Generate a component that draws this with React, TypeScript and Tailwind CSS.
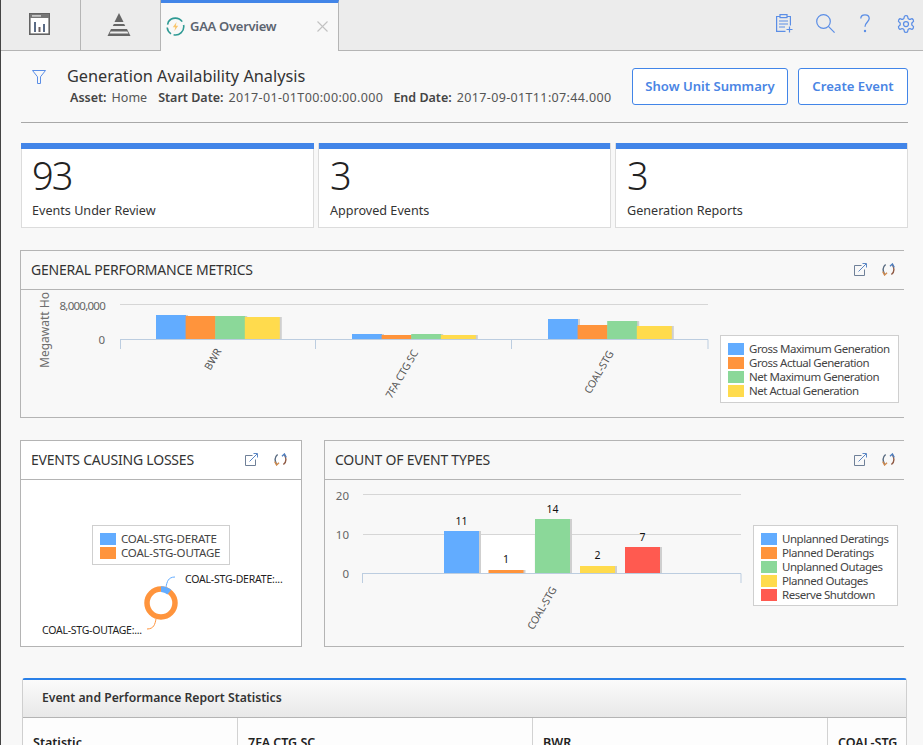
import React from "react";

const BLUE = "#62acff", ORANGE = "#ff943c", GREEN = "#8bd899", YELLOW = "#ffdb4d", RED = "#ff5a50";

function ExternalIcon() {
  return (
    <svg width="13" height="13" viewBox="0 0 13 13" fill="none" strokeWidth="1">
      <path d="M7.5 2.5H0.5V12.5H10.5V6.5" stroke="#6f8098" />
      <path d="M4.5 8.5L12 1M8.5 0.5H12.5V4.5" stroke="#5c87c4" />
    </svg>
  );
}

function RefreshIcon() {
  return (
    <svg width="13" height="13" viewBox="0 0 13 13" fill="none" strokeWidth="1.4">
      <path d="M3.6 1.5C1 3.5 0.4 7 2.4 11" stroke="#56697f" />
      <path d="M0.8 8.6L2.6 12L5 9.8" stroke="#d08a4c" />
      <path d="M9.4 11.5C12 9.5 12.6 6 10.6 2" stroke="#8f5a44" />
      <path d="M12.2 4.4L10.4 1L8 3.2" stroke="#4f7fc0" />
    </svg>
  );
}

function PanelHeader({ title, padRight = "pr-[9px]", gap = "gap-[15px]" }: { title: string; padRight?: string; gap?: string }) {
  return (
    <div className={"h-[39px] flex items-center justify-between border-b border-[#b4b4b4] pl-[10px] shrink-0 " + padRight}>
      <span className="text-[14px] tracking-[-0.22px] text-[#333] mb-[1px]">{title}</span>
      <div className={"flex items-center mb-[2px] " + gap}>
        <ExternalIcon />
        <RefreshIcon />
      </div>
    </div>
  );
}

function Legend({ items, className }: { items: [string, string][]; className: string }) {
  return (
    <div className={"flex flex-col bg-white border border-[#cfcfcf] py-[6px] pl-[7px] pr-[7px] " + className}>
      {items.map(([c, t]) => (
        <div key={t} className="flex items-center h-[14px] gap-[5px] whitespace-nowrap text-[11.5px] text-[#444]">
          <span className="w-[16px] h-[12px] shrink-0" style={{ background: c }} />
          <span>{t}</span>
        </div>
      ))}
    </div>
  );
}

function KPI({ value, label, pad }: { value: string; label: string; pad: string }) {
  return (
    <div className={"h-[85px] bg-white border border-[#dcdcdc] border-t-0 flex flex-col " + pad}>
      <div className="h-[6px] bg-[#4285e8] -mx-[11px] shrink-0" />
      <div className="text-[38px] leading-[50px] font-light tracking-[-2px] text-[#222] mt-[1px]">{value}</div>
      <div className="text-[12.6px] leading-[18px] text-[#333] mt-[2px]">{label}</div>
    </div>
  );
}

function Bar({ x, top, w, base, c }: { x: number; top: number; w: number; base: number; c: string }) {
  return (
    <g>
      <rect x={x + 2} y={top} width={w} height={base - top} fill="#cfcfcf" />
      <rect x={x} y={top} width={w} height={base - top} fill={c} />
    </g>
  );
}

const FONT = "'Noto Sans', 'Open Sans', sans-serif";

function GeneralChart() {
  // offset: svg origin = page (21, 290)
  const ox = 21, oy = 290, b = 339.5 - oy;
  const groups: [number, number[]][] = [
    [156, [315, 316, 316, 317]],
    [352, [334, 335, 334, 335]],
    [548, [319, 325, 321, 326]],
  ];
  const colors = [BLUE, ORANGE, GREEN, YELLOW];
  return (
    <svg width="699" height="127" style={{ fontFamily: FONT }} className="shrink-0">
      <line x1={120 - ox} x2={708 - ox} y1={304.5 - oy} y2={304.5 - oy} stroke="#d6d6d6" />
      {groups.map(([x, tops]) =>
        [0, 1, 2, 3].map((i) => (
          <Bar key={x + "-" + i} x={x - ox + i * 29.6} top={tops[i] - oy} w={i === 3 ? 35 : 30} base={b} c={colors[i]} />
        ))
      )}
      <line x1={120 - ox} x2={708 - ox} y1={b} y2={b} stroke="#bccde0" />
      {[120.5, 315.5, 511.5, 708].map((x) => (
        <line key={x} x1={x - ox} x2={x - ox} y1={b} y2={349 - oy} stroke="#bccde0" />
      ))}
      <text x={84} y={20} textAnchor="end" fontSize="11.5" letterSpacing="-0.75" fill="#666">8,000,000</text>
      <text x={84} y={54} textAnchor="end" fontSize="11.5" fill="#666">0</text>
      <text transform="translate(28,40) rotate(-90)" textAnchor="middle" fontSize="12" fill="#6e6e6e">Megawatt Ho</text>
      <text transform="translate(195,71) rotate(-60)" textAnchor="middle" fontSize="10.5" fill="#555">BWR</text>
      <text transform="translate(384,86) rotate(-60)" textAnchor="middle" fontSize="10.5" letterSpacing="-0.2" fill="#555">7FA CTG SC</text>
      <text transform="translate(581,84) rotate(-60)" textAnchor="middle" fontSize="10.5" letterSpacing="-0.2" fill="#555">COAL-STG</text>
    </svg>
  );
}

function Donut() {
  // svg origin = page (21, 565)
  const ox = 21, oy = 565;
  const cx = 161 - ox, cy = 603 - oy;
  return (
    <svg width="280" height="80" style={{ fontFamily: FONT }} className="shrink-0">
      <circle cx={cx} cy={cy} r={14} fill="none" stroke={ORANGE} strokeWidth="5.5" />
      <path d={`M${cx} ${cy - 16.8} A16.8 16.8 0 0 1 ${cx + 10.2} ${cy - 13.3} L${cx + 6.5} ${cy - 8.6} A11 11 0 0 0 ${cx} ${cy - 11} Z`} fill={BLUE} />
      <path d={`M${166 - ox} ${587 - oy} C${167 - ox} ${582 - oy} ${168 - ox} ${577 - oy} ${175 - ox} ${577 - oy}`} fill="none" stroke={BLUE} />
      <path d={`M${156 - ox} ${619 - oy} C${155 - ox} ${624 - oy} ${154 - ox} ${629 - oy} ${147 - ox} ${629 - oy}`} fill="none" stroke={ORANGE} />
      <text x={185 - ox} y={583 - oy} fontSize="10.5" letterSpacing="-0.2" fill="#222">COAL-STG-DERATE:...</text>
      <text x={42 - ox} y={634 - oy} fontSize="10.5" letterSpacing="-0.25" fill="#222">COAL-STG-OUTAGE:...</text>
    </svg>
  );
}

function EventChart() {
  // svg origin = page (325, 480)
  const ox = 325, oy = 480, b = 573.5 - oy;
  const bars: [number, number, string, string, number][] = [
    [444, 531, BLUE, "11", 521],
    [488.5, 570, ORANGE, "1", 559],
    [535, 519, GREEN, "14", 509],
    [580, 566, YELLOW, "2", 555],
    [625, 547, RED, "7", 537],
  ];
  return (
    <svg width="428" height="165" style={{ fontFamily: FONT }} className="shrink-0">
      {[494.5, 534.5].map((y) => (
        <line key={y} x1={363 - ox} x2={741 - ox} y1={y - oy} y2={y - oy} stroke="#d6d6d6" />
      ))}
      <rect x={481 - ox} y={535 - oy} width={53} height={38} fill="#ffffff" />
      {bars.map(([x, t, c, l, ly]) => (
        <g key={l}>
          <Bar x={x - ox} top={t - oy} w={35} base={b} c={c} />
          <text x={x - ox + 17.5} y={ly - oy + 4} textAnchor="middle" fontSize="10.5" fill="#111">{l}</text>
        </g>
      ))}
      <line x1={362 - ox} x2={741 - ox} y1={b} y2={b} stroke="#bccde0" />
      <line x1={362.5 - ox} x2={362.5 - ox} y1={b} y2={583 - oy} stroke="#bccde0" />
      <line x1={741 - ox} x2={741 - ox} y1={b} y2={583 - oy} stroke="#bccde0" />
      <text x={24} y={20} textAnchor="end" fontSize="11.5" fill="#666">20</text>
      <text x={24} y={59} textAnchor="end" fontSize="11.5" fill="#666">10</text>
      <text x={24} y={98} textAnchor="end" fontSize="11.5" fill="#666">0</text>
      <text transform="translate(220,130) rotate(-60)" textAnchor="middle" fontSize="10.5" letterSpacing="-0.2" fill="#555">COAL-STG</text>
    </svg>
  );
}

function TopIcons() {
  return (
    <div className="ml-auto flex items-center h-full pr-[7px] pb-[3px]">
      <svg width="17" height="19" viewBox="0 0 17 19" fill="none" stroke="#5b8ee6" strokeWidth="1.2">
        <path d="M4 2.5H0.6V17.4H9.5M11 2.5H14.4V11.5" />
        <rect x="4" y="0.6" width="7" height="3" />
        <path d="M3 7H12M3 10H12M3 13H9" />
        <path d="M13.5 12.5V18.5M10.5 15.5H16.5" />
      </svg>
      <svg width="19" height="19" viewBox="0 0 19 19" fill="none" stroke="#5b8ee6" strokeWidth="1.2" className="ml-[23px]">
        <circle cx="7.5" cy="7.5" r="6.8" />
        <path d="M12.4 12.4L18.6 18.6" />
      </svg>
      <svg width="10" height="19" viewBox="0 0 10 19" fill="none" stroke="#5b8ee6" strokeWidth="1.3" className="ml-[25px]">
        <path d="M0.8 4.5C0.8 2 2.6 0.8 5 0.8C7.4 0.8 9.2 2.4 9.2 4.6C9.2 7.8 5 8.4 5 12.8" />
        <circle cx="5" cy="17" r="1.2" fill="#5b8ee6" stroke="none" />
      </svg>
      <svg width="20" height="20" viewBox="0 0 24 24" fill="none" stroke="#5b8ee6" strokeWidth="1.5" strokeLinejoin="round" className="ml-[26px]">
        <path d="M12.22 2h-.44a2 2 0 0 0-2 2v.18a2 2 0 0 1-1 1.73l-.43.25a2 2 0 0 1-2 0l-.15-.08a2 2 0 0 0-2.73.73l-.22.38a2 2 0 0 0 .73 2.73l.15.1a2 2 0 0 1 1 1.72v.51a2 2 0 0 1-1 1.74l-.15.09a2 2 0 0 0-.73 2.73l.22.38a2 2 0 0 0 2.73.73l.15-.08a2 2 0 0 1 2 0l.43.25a2 2 0 0 1 1 1.73V20a2 2 0 0 0 2 2h.44a2 2 0 0 0 2-2v-.18a2 2 0 0 1 1-1.73l.43-.25a2 2 0 0 1 2 0l.15.08a2 2 0 0 0 2.73-.73l.22-.39a2 2 0 0 0-.73-2.73l-.15-.08a2 2 0 0 1-1-1.74v-.5a2 2 0 0 1 1-1.74l.15-.09a2 2 0 0 0 .73-2.73l-.22-.38a2 2 0 0 0-2.73-.73l-.15.08a2 2 0 0 1-2 0l-.43-.25a2 2 0 0 1-1-1.73V4a2 2 0 0 0-2-2z" />
        <circle cx="12" cy="12" r="3" />
      </svg>
    </div>
  );
}

function TabBar() {
  return (
    <div className="h-[51px] flex bg-[#ececec] border-b border-[#b5b5b5] shrink-0">
      <div className="w-[80px] flex items-center justify-center border-r border-[#b5b5b5] pr-[3px] pb-[3px]">
        <svg width="21" height="22" viewBox="0 0 21 22">
          <rect x="0.8" y="0.8" width="19.4" height="20.4" fill="#fff" stroke="#636363" strokeWidth="1.6" />
          <rect x="1" y="1" width="19" height="4" fill="#777" />
          <rect x="3" y="2.2" width="9" height="1.4" fill="#ddd" />
          <rect x="5" y="9" width="2" height="10" fill="#5a6b85" />
          <rect x="9.5" y="14" width="2" height="5" fill="#6b5f60" />
          <rect x="14" y="11" width="2" height="8" fill="#5a6b85" />
        </svg>
      </div>
      <div className="w-[80px] flex items-center justify-center border-r border-[#b5b5b5] pr-[3px] pb-[2px]">
        <svg width="24" height="23" viewBox="0 0 24 23" fill="#666">
          <path d="M12 0L16.5 9H7.5Z" />
          <path d="M6.8 11H17.2L18.2 13H5.8Z" />
          <path d="M4 16H20L23.5 23H0.5Z" />
          <path d="M3.6 18.5H20.4L21.4 20.5H2.6Z" fill="#eee" />
        </svg>
      </div>
      <div className="w-[178px] h-[51px] bg-[#f8f8f8] border-r border-[#b5b5b5] border-t-[3px] border-t-[#4285e8] flex items-center pl-[5px] pb-[1px] relative">
        <svg width="19" height="19" viewBox="0 0 19 19" fill="none" className="shrink-0">
          <path d="M16.2 4.6A8.4 8.4 0 0 0 2.4 4.8L1.6 7.6M1.2 10.5A8.4 8.4 0 0 0 5 16.8M7.6 17.8A8.4 8.4 0 0 0 17.6 8" stroke="#2f9a94" strokeWidth="1.6" />
          <path d="M10.6 5L6.8 10.2H9.2L8.4 14L12.2 8.8H9.8Z" fill="#f9c66e" />
        </svg>
        <span className="ml-[5px] text-[13px] tracking-[-0.3px] font-semibold text-[#5c6470]">GAA Overview</span>
        <svg width="11" height="11" viewBox="0 0 11 11" stroke="#c2c2c2" strokeWidth="1.1" className="absolute right-[10px] top-[18px]">
          <path d="M0.5 0.5L10.5 10.5M10.5 0.5L0.5 10.5" />
        </svg>
      </div>
      <TopIcons />
    </div>
  );
}

function MetaLabel({ children }: { children: React.ReactNode }) {
  return <span className="font-semibold text-[#444]">{children}</span>;
}

function MetaValue({ children, className = "" }: { children: React.ReactNode; className?: string }) {
  return <span className={"ml-[5px] " + className}>{children}</span>;
}

function PageHeader() {
  return (
    <div className="ml-[20px] w-[887px] h-[72px] flex border-b border-[#a8a8a8] shrink-0">
      <div className="w-[46px] pl-[11px] pt-[19px] shrink-0">
        <svg width="14" height="14" viewBox="0 0 14 14" fill="none" stroke="#5b8ee6" strokeWidth="1">
          <path d="M0.5 0.5H13.5L8.5 6.8V13.5H5.5V6.8Z" />
        </svg>
      </div>
      <div className="flex flex-col pt-[14px]">
        <div className="text-[16.3px] leading-[22px] text-[#333]">Generation Availability Analysis</div>
        <div className="ml-[3px] mt-[2px] flex text-[12.5px] leading-[18px] text-[#555] whitespace-nowrap">
          <MetaLabel>Asset:</MetaLabel>
          <MetaValue>Home</MetaValue>
          <span className="ml-[11px]"><MetaLabel>Start Date:</MetaLabel></span>
          <MetaValue className="tracking-[0.36px]">2017-01-01T00:00:00.000</MetaValue>
          <span className="ml-[10px]"><MetaLabel>End Date:</MetaLabel></span>
          <MetaValue className="tracking-[0.36px]">2017-09-01T11:07:44.000</MetaValue>
        </div>
      </div>
      <div className="ml-auto flex gap-[10px] pt-[17px]">
        <button className="w-[156px] h-[37px] bg-white border border-[#4285e8] rounded-[3px] text-[13.1px] font-semibold text-[#4a85e4]">Show Unit Summary</button>
        <button className="w-[110px] h-[37px] bg-white border border-[#4285e8] rounded-[3px] text-[13.1px] font-semibold text-[#4a85e4]">Create Event</button>
      </div>
    </div>
  );
}

function ReportCard() {
  const cols = ["Statistic", "7FA CTG SC", "BWR", "COAL-STG"];
  const widths = ["w-[215px]", "w-[295px]", "w-[295px]", "flex-1"];
  return (
    <div className="ml-[21px] mt-[31px] w-[885px] border-x border-[#cfcfcf] border-t-[2px] border-t-[#2a80e8] rounded-t-[3px] bg-[#fdfdfd] shrink-0">
      <div className="h-[38px] flex items-center pl-[19px] bg-gradient-to-b from-[#fbfbfb] to-[#e8e8e8] border-b border-[#b4b4b4] text-[12.2px] font-semibold text-[#333]">
        Event and Performance Report Statistics
      </div>
      <div className="flex h-[60px]">
        {cols.map((c, i) => (
          <div key={c} className={widths[i] + " pl-[10px] pt-[16px] text-[12.5px] font-semibold text-[#222] border-r border-[#d2d2d2] last:border-r-0 whitespace-nowrap"}>
            {c}
          </div>
        ))}
      </div>
    </div>
  );
}

export default function App() {
  return (
    <div className="w-[923px] h-[745px] overflow-hidden bg-[#f8f8f8] border-l border-[#444] flex flex-col" style={{ fontFamily: FONT }}>
      <TabBar />
      <PageHeader />
      <div className="ml-[20px] w-[887px] mt-[20px] grid grid-cols-3 gap-[4px] shrink-0">
        <KPI value="93" label="Events Under Review" pad="px-[10px]" />
        <KPI value="3" label="Approved Events" pad="px-[11px]" />
        <KPI value="3" label="Generation Reports" pad="px-[11px]" />
      </div>
      <div className="ml-[19px] mt-[22px] w-[884px] h-[168px] border border-r-0 border-[#b4b4b4] flex flex-col shrink-0">
        <PanelHeader title="GENERAL PERFORMANCE METRICS" />
        <div className="flex flex-1">
          <GeneralChart />
          <Legend
            className="mt-[45px] h-[68px] w-[179px] tracking-[-0.47px]"
            items={[
              [BLUE, "Gross Maximum Generation"],
              [ORANGE, "Gross Actual Generation"],
              [GREEN, "Net Maximum Generation"],
              [YELLOW, "Net Actual Generation"],
            ]}
          />
        </div>
      </div>
      <div className="ml-[19px] mt-[22px] flex gap-[22px] h-[207px] shrink-0">
        <div className="w-[282px] border border-[#b4b4b4] bg-white flex flex-col">
          <PanelHeader title="EVENTS CAUSING LOSSES" padRight="pr-[14px]" gap="gap-[16px]" />
          <div className="flex flex-col items-center flex-1">
            <Legend
              className="mt-[45px] h-[40px] w-[138px] tracking-[-0.2px]"
              items={[
                [BLUE, "COAL-STG-DERATE"],
                [ORANGE, "COAL-STG-OUTAGE"],
              ]}
            />
            <Donut />
          </div>
        </div>
        <div className="w-[580px] border border-r-0 border-[#b4b4b4] flex flex-col">
          <PanelHeader title="COUNT OF EVENT TYPES" />
          <div className="flex flex-1">
            <EventChart />
            <Legend
              className="mt-[45px] h-[81px] w-[145px] tracking-[-0.47px]"
              items={[
                [BLUE, "Unplanned Deratings"],
                [ORANGE, "Planned Deratings"],
                [GREEN, "Unplanned Outages"],
                [YELLOW, "Planned Outages"],
                [RED, "Reserve Shutdown"],
              ]}
            />
          </div>
        </div>
      </div>
      <ReportCard />
    </div>
  );
}
